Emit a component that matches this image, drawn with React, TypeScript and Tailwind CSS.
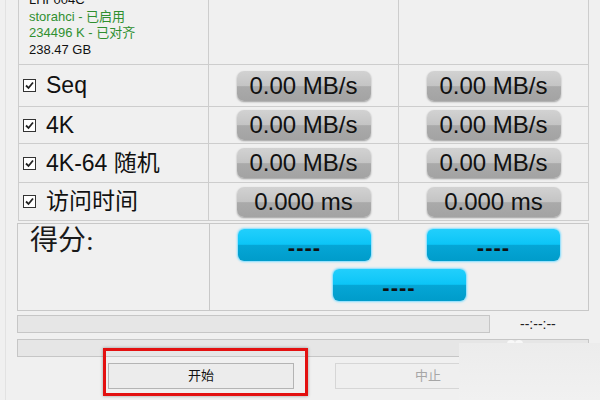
import React from "react";

const sans = { fontFamily: '"Liberation Sans", Arial, "Noto Sans CJK SC", sans-serif' };

function Check() {
  return (
    <div className="w-[13px] h-[13px] border border-[#333] bg-white flex items-center justify-center shrink-0">
      <svg width="9" height="9" viewBox="0 0 9 9">
        <path d="M1 4.5 L3.5 7 L8 1.5" fill="none" stroke="#222" strokeWidth="1.8" />
      </svg>
    </div>
  );
}

function GreyPill({ text }: { text: string }) {
  return (
    <div className="w-[134px] h-[30px] rounded-[7px] bg-[linear-gradient(to_bottom,#d2d2d2_0%,#c4c4c4_50%,#aaaaaa_52%,#a3a3a3_100%)] shadow-[0_1px_2px_rgba(0,0,0,0.35)] flex items-center justify-center text-[24px] text-[#111] leading-none">
      {text}
    </div>
  );
}

function BluePill() {
  return (
    <div className="w-[133px] h-[32px] rounded-[6px] bg-[linear-gradient(to_bottom,#22cffc_0%,#0cc5f7_48%,#05a6d6_50%,#009cca_100%)] shadow-[0_0_2px_1px_#7fdcff] flex items-center justify-center">
      <span className="text-[22px] font-bold text-[#111] leading-none mt-[6px] tracking-[1px]">----</span>
    </div>
  );
}

function Row({ h, label, a, b }: { h: string; label: string; a: string; b: string }) {
  return (
    <>
      <div className={`${h} border-r border-b border-[#cdcdcd] flex items-center pl-[4px] gap-[10px]`}>
        <Check />
        <span className="text-[23px] text-[#111] leading-none">{label}</span>
      </div>
      <div className={`${h} border-r border-b border-[#cdcdcd] flex items-center justify-center`}>
        <GreyPill text={a} />
      </div>
      <div className={`${h} border-r border-b border-[#cdcdcd] flex items-center justify-center`}>
        <GreyPill text={b} />
      </div>
    </>
  );
}

export default function App() {
  return (
    <div className="w-[600px] h-[400px] bg-[#f0f0f0] relative overflow-hidden" style={sans}>
      <div className="absolute left-[5px] top-0 bottom-0 w-px bg-[#e2e2e2]" />
      {/* table */}
      <div className="ml-[18px] mt-[-12px] w-[571px] grid grid-cols-[190px_190px_190px] border-l border-[#cdcdcd]">
        <div className="h-[77px] border-r border-b border-[#cdcdcd] pl-[10px] pt-[4px] text-[13px] leading-[16.5px]">
          <div className="text-[#111]">LHF004C</div>
          <div className="text-[#2f8f2f]">storahci - 已启用</div>
          <div className="text-[#2f8f2f]">234496 K - 已对齐</div>
          <div className="text-[#111]">238.47 GB</div>
        </div>
        <div className="h-[77px] border-r border-b border-[#cdcdcd]" />
        <div className="h-[77px] border-r border-b border-[#cdcdcd]" />
        <Row h="h-[42px]" label="Seq" a="0.00 MB/s" b="0.00 MB/s" />
        <Row h="h-[37px]" label="4K" a="0.00 MB/s" b="0.00 MB/s" />
        <Row h="h-[39px]" label="4K-64 随机" a="0.00 MB/s" b="0.00 MB/s" />
        <Row h="h-[38px]" label="访问时间" a="0.000 ms" b="0.000 ms" />
      </div>
      {/* score box */}
      <div className="ml-[17px] mt-[2px] w-[572px] h-[88px] border border-[#c8c8c8] grid grid-cols-[192px_1fr]">
        <div className="border-r border-[#c8c8c8] pl-[12px] pt-[1px]">
          <span
            className="text-[28px] leading-[32px] text-[#1a1a1a]"
            style={{ fontFamily: '"Liberation Serif", "Noto Sans CJK SC", serif' }}
          >
            得分:
          </span>
        </div>
        <div className="grid grid-cols-2 content-start pt-[5px] gap-y-[8px] justify-items-center">
          <BluePill />
          <BluePill />
          <div className="col-span-2">
            <BluePill />
          </div>
        </div>
      </div>
      {/* progress */}
      <div className="flex items-center mt-[4px] ml-[17px]">
        <div className="w-[473px] h-[18px] border border-[#c6c6c6] bg-[#e6e6e6]" />
        <span className="ml-[30px] text-[14px] text-[#222] leading-none">--:--:--</span>
      </div>
      <div className="mt-[6px] ml-[17px] w-[572px] h-[18px] border border-[#c6c6c6] bg-[#e6e6e6]" />
      {/* buttons */}
      <div className="flex mt-[6px] ml-[108px] gap-[41px]">
        <div className="w-[186px] h-[26px] border border-[#b4b4b4] bg-[#ececec] flex items-center justify-center text-[13px] text-[#111]">
          开始
        </div>
        <div className="w-[186px] h-[26px] border border-[#d6d6d6] bg-[#efefef] flex items-center justify-center text-[13px] text-[#a6a6a6]">
          中止
        </div>
      </div>
      {/* red highlight */}
      <div className="absolute left-[103px] top-[348px] w-[205px] h-[48px] border-[3px] border-[#e31010] shadow-[0_0_3px_rgba(0,0,0,0.35)]" />
      {/* watermark overlay */}
      <div className="absolute left-[507px] top-[340px] w-[8px] h-[8px] rounded-full bg-[#f8f8f8]" />
      <div className="absolute left-[515px] top-[340px] w-[8px] h-[8px] rounded-full bg-[#f8f8f8]" />
      <div className="absolute left-[459px] top-[343px] right-0 bottom-0 bg-[linear-gradient(to_bottom,#ececec,#f1f1f1)]" />
    </div>
  );
}
